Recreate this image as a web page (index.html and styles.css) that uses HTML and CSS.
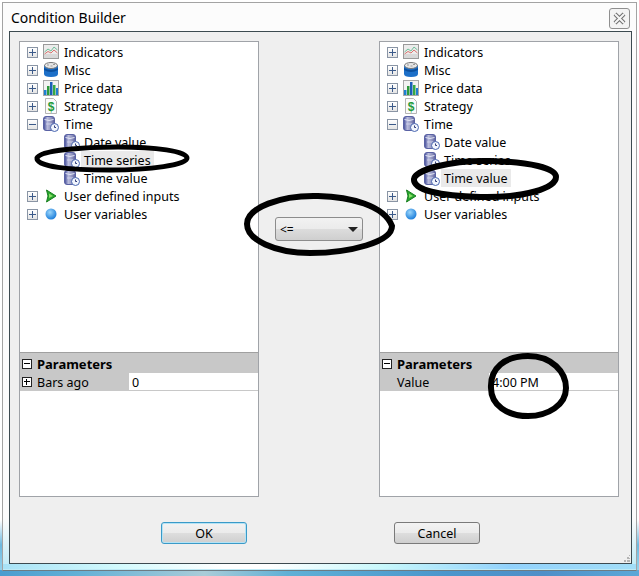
FILE: index.html
```html
<!DOCTYPE html>
<html lang="en">
<head>
    <meta charset="UTF-8">
    <meta name="viewport" content="width=device-width, initial-scale=1.0">
    <title>Condition Builder</title>
    <link rel="stylesheet" href="styles.css">
</head>
<body>
    <!-- icon set for the tree rows -->
    <svg class="icon-defs" width="0" height="0">
        <defs>
            <linearGradient id="cyl" x1="0" y1="0" x2="1" y2="0">
                <stop offset="0" stop-color="#3d4796"/>
                <stop offset="0.35" stop-color="#b9bcdc"/>
                <stop offset="0.7" stop-color="#8d91bd"/>
                <stop offset="1" stop-color="#5a5f9c"/>
            </linearGradient>
            <radialGradient id="ball" cx="0.4" cy="0.35" r="0.7">
                <stop offset="0" stop-color="#9bd6fb"/>
                <stop offset="1" stop-color="#1478d8"/>
            </radialGradient>
            <symbol id="i-chart" viewBox="0 0 16 16">
                <rect x="0.5" y="0.5" width="15" height="14" fill="#ececec" stroke="#9a9a9a"/>
                <rect x="1" y="10" width="14" height="4" fill="#d8d8d8"/>
                <path d="M1.5 8 L5 5 L8 7 L11 3 L14.5 6" fill="none" stroke="#6fbf9a"/>
                <path d="M1.5 10 L5 7.5 L8 9 L11 6 L14.5 9" fill="none" stroke="#d9736e"/>
            </symbol>
            <symbol id="i-misc" viewBox="0 0 16 16">
                <path d="M1 3 L1 12 Q1 15 8 15 Q15 15 15 12 L15 3 Z" fill="#1c6fc8"/>
                <path d="M1 6 Q8 10 15 6 L15 8 Q8 12 1 8 Z" fill="#0b4f9e"/>
                <ellipse cx="8" cy="3.5" rx="6.5" ry="3" fill="#e6e6e6" stroke="#777"/>
                <path d="M4 3 h2 M7.5 4 h2 M10 2.5 h2" stroke="#999"/>
            </symbol>
            <symbol id="i-bars" viewBox="0 0 16 16">
                <rect x="0.5" y="0.5" width="15" height="15" fill="#f2f2f2" stroke="#a8a8a8"/>
                <rect x="1" y="10" width="2.5" height="5" fill="#1f7fd0"/>
                <rect x="4" y="6" width="2.5" height="9" fill="#2e9a3c"/>
                <rect x="7" y="2" width="2.5" height="13" fill="#1a5fb8"/>
                <rect x="10" y="5" width="2.5" height="10" fill="#37a843"/>
                <rect x="13" y="8" width="2" height="7" fill="#1f7fd0"/>
            </symbol>
            <symbol id="i-doc" viewBox="0 0 16 16">
                <path d="M2.5 0.5 H10.5 L13.5 3.5 V15.5 H2.5 Z" fill="#fafafa" stroke="#b4b4b4"/>
                <text x="8" y="13" text-anchor="middle" class="dollar">$</text>
            </symbol>
            <symbol id="i-time" viewBox="0 0 16 16">
                <rect x="0.5" y="0.5" width="11" height="14" rx="2.5" fill="url(#cyl)" stroke="#5a62a4"/>
                <path d="M1.5 3.5 Q6 5.5 10.5 3.5" fill="none" stroke="#e4e6f5"/>
                <path d="M3 8 H9" stroke="#cfd2ea"/>
                <circle cx="11.5" cy="11.5" r="4" fill="#f1f5fc" stroke="#4a66b0"/>
                <path d="M11.5 9.5 V11.5 H13" fill="none" stroke="#33407f"/>
            </symbol>
            <symbol id="i-play" viewBox="0 0 16 16">
                <path d="M3.5 2 L13 8 L3.5 14 L5 8 Z" fill="#27a52e" stroke="#1a7f20"/>
                <path d="M6 5.5 L10 8 L6 10 Z" fill="#8be06a"/>
            </symbol>
            <symbol id="i-ball" viewBox="0 0 16 16">
                <circle cx="8" cy="8" r="5.5" fill="url(#ball)"/>
            </symbol>
        </defs>
    </svg>

    <div class="window">
        <div class="titlebar">
            <span class="title">Condition Builder</span>
            <button class="close">
                <svg width="13" height="13" viewBox="0 0 13 13">
                    <path d="M2 2 L11 11 M11 2 L2 11" stroke="#6f6f6f" stroke-width="4" fill="none"/>
                    <path d="M2 2 L11 11 M11 2 L2 11" stroke="#f6f6f6" stroke-width="2" fill="none"/>
                </svg>
            </button>
        </div>

        <div class="client">
            <div class="columns">
                <div class="panel">
                    <div class="tree">
                        <div class="row"><span class="exp plus"></span><svg class="ico"><use href="#i-chart"/></svg><span class="lbl">Indicators</span></div>
                        <div class="row"><span class="exp plus"></span><svg class="ico"><use href="#i-misc"/></svg><span class="lbl">Misc</span></div>
                        <div class="row"><span class="exp plus"></span><svg class="ico"><use href="#i-bars"/></svg><span class="lbl">Price data</span></div>
                        <div class="row"><span class="exp plus"></span><svg class="ico"><use href="#i-doc"/></svg><span class="lbl">Strategy</span></div>
                        <div class="row"><span class="exp"></span><svg class="ico"><use href="#i-time"/></svg><span class="lbl">Time</span></div>
                        <div class="row child"><svg class="ico"><use href="#i-time"/></svg><span class="lbl">Date value</span></div>
                        <div class="row child"><svg class="ico"><use href="#i-time"/></svg><span class="lbl selected">Time series</span></div>
                        <div class="row child"><svg class="ico"><use href="#i-time"/></svg><span class="lbl">Time value</span></div>
                        <div class="row"><span class="exp plus"></span><svg class="ico"><use href="#i-play"/></svg><span class="lbl">User defined inputs</span></div>
                        <div class="row"><span class="exp plus"></span><svg class="ico"><use href="#i-ball"/></svg><span class="lbl">User variables</span></div>
                    </div>
                    <div class="params">
                        <div class="params-head"><span class="box"></span><span>Parameters</span></div>
                        <div class="param">
                            <div class="param-name"><span class="box plus"></span><span>Bars ago</span></div>
                            <div class="param-value">0</div>
                        </div>
                    </div>
                </div>

                <div class="middle">
                    <div class="combo">
                        <span>&lt;=</span>
                        <span class="arrow"></span>
                    </div>
                </div>

                <div class="panel">
                    <div class="tree">
                        <div class="row"><span class="exp plus"></span><svg class="ico"><use href="#i-chart"/></svg><span class="lbl">Indicators</span></div>
                        <div class="row"><span class="exp plus"></span><svg class="ico"><use href="#i-misc"/></svg><span class="lbl">Misc</span></div>
                        <div class="row"><span class="exp plus"></span><svg class="ico"><use href="#i-bars"/></svg><span class="lbl">Price data</span></div>
                        <div class="row"><span class="exp plus"></span><svg class="ico"><use href="#i-doc"/></svg><span class="lbl">Strategy</span></div>
                        <div class="row"><span class="exp"></span><svg class="ico"><use href="#i-time"/></svg><span class="lbl">Time</span></div>
                        <div class="row child"><svg class="ico"><use href="#i-time"/></svg><span class="lbl">Date value</span></div>
                        <div class="row child"><svg class="ico"><use href="#i-time"/></svg><span class="lbl">Time series</span></div>
                        <div class="row child"><svg class="ico"><use href="#i-time"/></svg><span class="lbl selected">Time value</span></div>
                        <div class="row"><span class="exp plus"></span><svg class="ico"><use href="#i-play"/></svg><span class="lbl">User defined inputs</span></div>
                        <div class="row"><span class="exp plus"></span><svg class="ico"><use href="#i-ball"/></svg><span class="lbl">User variables</span></div>
                    </div>
                    <div class="params">
                        <div class="params-head"><span class="box"></span><span>Parameters</span></div>
                        <div class="param">
                            <div class="param-name"><span class="box blank"></span><span>Value</span></div>
                            <div class="param-value">4:00 PM</div>
                        </div>
                    </div>
                </div>
            </div>

            <div class="buttons">
                <button class="btn default">OK</button>
                <button class="btn">Cancel</button>
            </div>

            <svg class="grip" width="8" height="8" viewBox="0 0 8 8">
                <path d="M6 0 h1 v1 h-1 Z M4 2 h2 v2 h-2 Z M6 3 h1 v1 h-1 Z M1 5 h2 v2 h-2 Z M4 5 h3 v2 h-3 Z" fill="#b4b4b4"/>
            </svg>
        </div>
    </div>

    <!-- hand drawn marker circles on top of the dialog -->
    <svg class="marks" width="639" height="576" viewBox="0 0 639 576">
        <path class="mark thin" d="M37 158 C40 150 85 147 118 147 C155 147 187 151 187 158 C187 165 150 170 110 170 C70 170 36 167 37 158 Z"/>
        <path class="mark" d="M414 179 C415 170 450 160 490 161 C530 162 556 168 556 177 C556 188 525 198 480 197 C440 196 413 190 414 179 Z"/>
        <path class="mark" d="M247 224 C247 208 280 195 318 196 C350 197 384 205 392 226 C392 242 350 253 310 253 C275 253 247 240 247 224 Z"/>
        <path class="mark" d="M491 388 C490 368 505 356 528 356 C552 356 566 372 566 388 C566 405 548 416 528 416 C507 416 491 405 491 388 Z"/>
    </svg>
</body>
</html>
```

FILE: styles.css
```css
html, body {
    margin: 0;
    padding: 0;
}
body {
    width: 639px;
    height: 576px;
    overflow: hidden;
    position: relative;
    background:
        linear-gradient(to right, #4a9ccf, #62b0d6 12%, #a9ccd8 32%, #5fb0d6 45%, #4a96cc 70%, #4f8fc8 85%, #5aa8d8) left bottom / 100% 6px no-repeat,
        linear-gradient(to bottom, #fff 0, #fff 520px, #6db9df 545px, #9fd8ee 100%);
    font-family: "Noto Sans", "Open Sans", sans-serif;
    font-size: 12.5px;
    color: #000;
}
.icon-defs {
    position: absolute;
}
.dollar {
    font-family: "Liberation Sans", sans-serif;
    font-size: 12px;
    font-weight: bold;
    fill: #1f9a3a;
}

/* window frame */
.window {
    box-sizing: border-box;
    width: 635px;
    height: 569px;
    margin: 2px 0 0 2px;
    border: 1px solid #a3a3a3;
    border-bottom-color: #6c7c84;
    background:
        linear-gradient(to right, #a8e2f6, #d2fafd 18%, #fff 35%, #fff 42%, #c8f8fc 60%, #92d2fc 80%, #a2def8) left bottom 1px / 100% 5px no-repeat,
        linear-gradient(to bottom, #fcfcfc 0, #fcfcfc 515px, #bdeaf6 100%);
    padding: 0 6px;
}
.titlebar {
    height: 28px;
    display: flex;
    align-items: center;
    justify-content: space-between;
}
.title {
    font-size: 14px;
    padding-left: 2px;
}
.close {
    box-sizing: border-box;
    width: 21px;
    height: 21px;
    margin: 3px 0 0 0;
    padding: 0;
    display: flex;
    align-items: center;
    justify-content: center;
    background: #f4f4f4;
    border: 1px solid #8f8f8f;
    border-radius: 3px;
}

/* dialog body */
.client {
    box-sizing: border-box;
    width: 623px;
    height: 533px;
    border: 1px solid #3c4a50;
    background: #efefef;
    padding: 9px;
    position: relative;
}
.columns {
    display: flex;
}
.panel {
    box-sizing: border-box;
    width: 240px;
    height: 456px;
    border: 1px solid #a0a3a8;
    background: #fff;
    display: flex;
    flex-direction: column;
}
.tree {
    box-sizing: border-box;
    height: 311px;
    padding-top: 1px;
    border-bottom: 1px solid #a0a0a0;
}
.row {
    height: 18px;
    display: flex;
    align-items: center;
    padding-left: 7px;
}
.row.child {
    padding-left: 44px;
}
.exp {
    box-sizing: border-box;
    width: 11px;
    height: 11px;
    margin-right: 5px;
    border: 1px solid #8a95a5;
    background: linear-gradient(to bottom, #fff, #e4e4e4);
    position: relative;
}
.exp::before {
    content: "";
    position: absolute;
    left: 1px;
    top: 4px;
    width: 7px;
    height: 1px;
    background: #3b5a8a;
}
.exp.plus::after {
    content: "";
    position: absolute;
    left: 4px;
    top: 1px;
    width: 1px;
    height: 7px;
    background: #3b5a8a;
}
.ico {
    width: 16px;
    height: 16px;
    flex: none;
}
.lbl {
    height: 18px;
    margin-left: 2px;
    padding: 0 3px;
    line-height: 20px;
    white-space: nowrap;
}
.row.child .lbl {
    margin-left: 1px;
}
.lbl.selected {
    background: #eaeaea;
}

/* parameter grid */
.params {
    flex: 1;
}
.params-head {
    box-sizing: border-box;
    height: 20px;
    padding: 2px 0 0 2px;
    background: #c8c8c8;
    display: flex;
    align-items: center;
    font-size: 13px;
    font-weight: bold;
}
.box {
    box-sizing: border-box;
    width: 10px;
    height: 10px;
    margin-right: 5px;
    flex: none;
    border: 1px solid #222;
    background: #fff;
    position: relative;
}
.box::before {
    content: "";
    position: absolute;
    left: 1px;
    top: 3px;
    width: 6px;
    height: 1px;
    background: #000;
}
.box.plus::after {
    content: "";
    position: absolute;
    left: 3px;
    top: 1px;
    width: 1px;
    height: 6px;
    background: #000;
}
.box.blank {
    visibility: hidden;
}
.param {
    display: flex;
    height: 18px;
    border-bottom: 1px solid #c8c8c8;
    box-sizing: border-box;
}
.param-name {
    width: 109px;
    background: #c8c8c8;
    display: flex;
    align-items: center;
    padding: 1px 0 0 2px;
    box-sizing: border-box;
}
.param-value {
    padding-left: 3px;
    line-height: 19px;
}

/* comparison combo */
.middle {
    width: 120px;
    display: flex;
    justify-content: center;
    padding-top: 176px;
    box-sizing: border-box;
}
.combo {
    box-sizing: border-box;
    width: 88px;
    height: 24px;
    border: 1px solid #8c8c8c;
    border-radius: 3px;
    background: linear-gradient(to bottom, #f2f2f2 0, #ebebeb 48%, #dcdcdc 52%, #cfcfcf 100%);
    display: flex;
    align-items: center;
    justify-content: space-between;
    padding: 0 4px 0 4px;
    font-size: 12px;
}
.arrow {
    width: 0;
    height: 0;
    border-left: 5px solid transparent;
    border-right: 5px solid transparent;
    border-top: 5px solid #222;
}

/* bottom buttons */
.buttons {
    display: flex;
    gap: 147px;
    margin: 25px 0 0 142px;
}
.btn {
    box-sizing: border-box;
    width: 86px;
    height: 22px;
    padding: 0;
    border: 1px solid #7a7a7a;
    border-radius: 3px;
    background: linear-gradient(to bottom, #f3f3f3 0, #ebebeb 48%, #dddddd 52%, #cfcfcf 100%);
    font-family: inherit;
    font-size: 12.5px;
    color: #000;
}
.btn.default {
    border-color: #3a9ac8;
    box-shadow: inset 0 0 0 1px #b5e3f5;
}

/* size grip sits in the dialog corner */
.grip {
    position: absolute;
    right: 0;
    bottom: 0;
}

/* marker circles */
.marks {
    position: absolute;
    left: 0;
    top: 0;
    pointer-events: none;
}
.mark {
    fill: none;
    stroke: #000;
    stroke-width: 6;
}
.mark.thin {
    stroke-width: 5;
}
```
